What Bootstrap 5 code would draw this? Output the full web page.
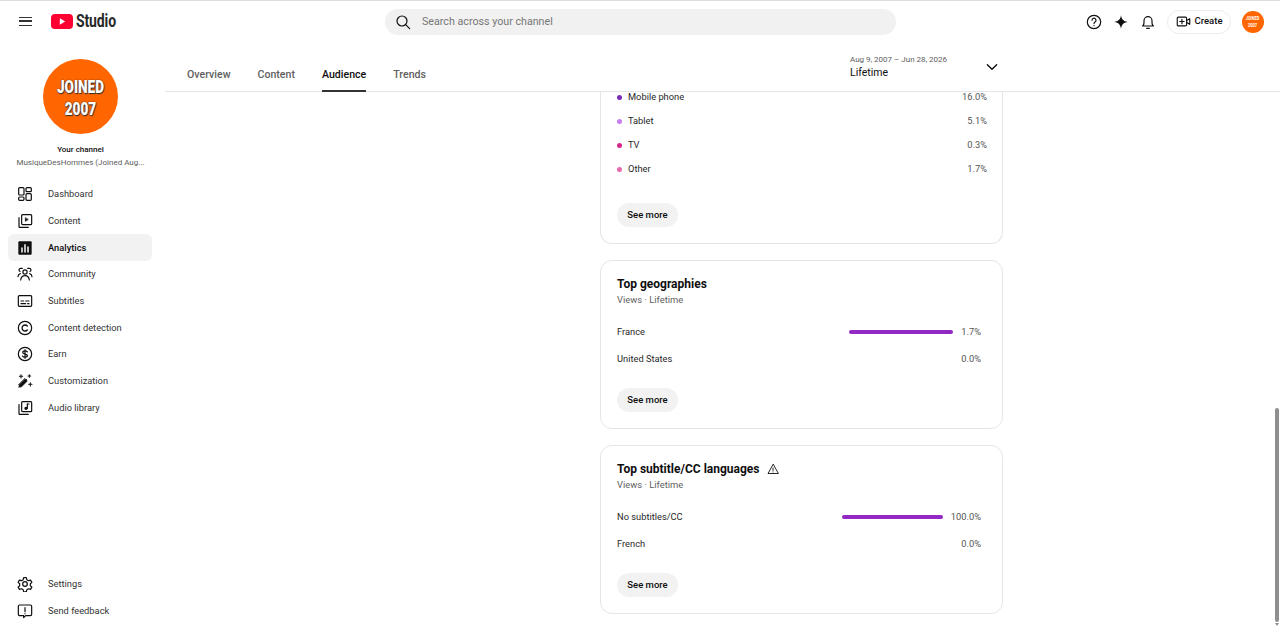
<!DOCTYPE html>
<html lang="en">
<head>
  <meta charset="UTF-8">
  <meta name="viewport" content="width=device-width, initial-scale=1.0">
  <title>Channel analytics - YouTube Studio</title>
  <link rel="stylesheet" href="https://cdn.jsdelivr.net/npm/bootstrap@5.3.3/dist/css/bootstrap.min.css">
  <script src="https://cdn.jsdelivr.net/npm/bootstrap@5.3.3/dist/js/bootstrap.bundle.min.js"></script>
  <style>
    html, body { height: 630px; overflow: hidden; }
    body { font-family: Roboto, "Liberation Sans", sans-serif; color: #0f0f0f; font-size: 10px; background: #fff; }
    svg.ico { fill: none; stroke: #0f0f0f; stroke-width: 1.8; stroke-linecap: round; stroke-linejoin: round; flex: none; }

    .top-bar { height: 45px; border-top: 1px solid #dedede; padding: 0 16px 0 19px; }
    .burger { width: 13px; height: 9px; margin-top: -3px; border-top: 1.5px solid #333; border-bottom: 1.5px solid #333; position: relative; }
    .burger::after { content: ""; position: absolute; left: 0; right: 0; top: 2.25px; height: 1.5px; background: #333; }
    .yt-logo { margin-left: 19px; margin-top: -3px; }
    .studio-word { display: inline-block; width: 40px; font-weight: 700; font-size: 18.5px; letter-spacing: -.2px; margin-left: 3px; margin-top: -3px; color: #282828; line-height: 1; transform: scaleX(.76); transform-origin: left center; white-space: nowrap; }
    .search-box { width: 511px; height: 26px; margin-left: 269px; margin-top: -3px; background: #f1f1f1; border-radius: 13px; padding-left: 10px; color: #777; font-size: 10.7px; gap: 11px; }
    .search-box span { padding-top: 1px; }
    .top-actions { gap: 11px; margin-top: -3px; }
    .create-btn { width: 64px; height: 24px; border: 1px solid #ececec; border-radius: 12px; font-size: 9.5px; font-weight: 500; gap: 4px; margin-left: 0; margin-right: 0; }
    .av-small { width: 22px; height: 22px; border-radius: 50%; background: #ff6600; color: #fff; font-size: 5.5px; font-weight: 700; line-height: 6.5px; text-align: center; }
    .av-small div { transform: scaleX(.72); }
    .chan-pic div { transform: scale(.8, 1.1); }

    .side-col { width: 165px; height: 585px; }
    .chan-pic { width: 75px; height: 75px; border-radius: 50%; background: #ff6600; color: #fff; margin: 14px 0 0 43px; font-weight: 900; font-size: 17px; line-height: 20px; text-align: center; text-shadow: 0 0 1.5px #222, 1px 1px 1px #333; }
    .chan-title { font-size: 8px; font-weight: 500; text-align: center; margin-top: 10px; line-height: 11px; padding-right: 4px; }
    .chan-name { font-size: 8px; color: #606060; text-align: center; line-height: 11px; margin: 2px 0 13px; white-space: nowrap; padding-right: 4px; }
    .side-link { height: 26.67px; margin: 0 13px 0 8px; padding-left: 9px; gap: 15px; color: #333; font-size: 9.3px; border-radius: 6px; text-decoration: none; }
    .side-link.on { background: #f2f2f2; font-weight: 500; color: #0f0f0f; }
    .side-foot { margin-bottom: 6px; }

    .main-col { height: 585px; }
    .tab-row { height: 47px; border-bottom: 1px solid #e6e6e6; padding-left: 22px; position: relative; }
    .tab-item { font-size: 10.6px; font-weight: 500; color: #606060; height: 46px; padding-top: 23px; margin-right: 27px; position: relative; line-height: 13px; }
    .tab-item.on { color: #0f0f0f; }
    .tab-item.on::after { content: ""; position: absolute; left: 0; right: 0; bottom: -1px; height: 2px; background: #333; }
    .date-pick { margin-left: 397px; margin-top: 9px; width: 149px; }
    .date-range { font-size: 8px; color: #606060; line-height: 11px; }
    .date-name { font-size: 10.5px; color: #0f0f0f; line-height: 14px; margin-top: 1px; }

    .scroll-area { padding-left: 435px; overflow: hidden; flex: 1; }
    .stat-box { width: 403px; border: 1px solid #e5e5e5; border-radius: 12px; padding: 0 16px; margin-bottom: 16px; height: 169px; background: #fff; }
    .stat-box.clipped { border-top: 0; border-radius: 0 0 12px 12px; height: 159px; margin-top: -7px; }
    .stat-title { font-size: 12px; font-weight: 700; line-height: 16px; padding-top: 15px; }
    .stat-sub { font-size: 9.4px; color: #606060; line-height: 12px; margin-top: 2px; margin-bottom: 12px; }
    .stat-row { height: 27px; font-size: 9.3px; color: #282828; padding-right: 5px; }
    .stat-row + .more-btn { margin-top: 15.5px; }
    .dev-row { height: 24px; font-size: 9.3px; color: #282828; margin-right: -1px; }
    .dev-dot { width: 5px; height: 5px; border-radius: 50%; margin-right: 6px; }
    .dev-row .val, .stat-row .val { margin-left: auto; color: #555; }
    .stat-bar { height: 4px; border-radius: 2px; background: #9229c4; margin-left: auto; margin-right: 8px; }
    .stat-row .stat-bar + .val { margin-left: 0; }
    .more-btn { display: block; width: 61px; height: 24px; line-height: 24px; background: #f2f2f2; border-radius: 12px; font-size: 9.5px; font-weight: 500; text-align: center; color: #0f0f0f; border: 0; padding: 0; }
    .dev-row + .more-btn { margin-top: 22px; }
    .fake-scroll { position: absolute; right: 1px; top: 408px; width: 4px; height: 214px; background: #8f8f8f; border-radius: 2px; }
    .fake-arrow { position: absolute; right: 1px; top: 623px; border: 2px solid transparent; border-top: 3px solid #8f8f8f; }
  </style>
</head>
<body>
  <!-- Top bar -->
  <header class="top-bar d-flex align-items-center">
    <div class="burger"></div>
    <svg class="yt-logo" width="22" height="15" viewBox="0 0 22 15"><rect width="22" height="15" rx="4" fill="#ff0033"/><path d="M8.8 4.3v6.4l5.4-3.2z" fill="#fff"/></svg>
    <span class="studio-word">Studio</span>
    <div class="search-box d-flex align-items-center">
      <svg class="ico" width="16" height="16" viewBox="0 0 24 24"><circle cx="10.5" cy="10.5" r="7.5"/><path d="M16 16l6 6"/></svg>
      <span>Search across your channel</span>
    </div>
    <div class="top-actions d-flex align-items-center ms-auto">
      <svg class="ico" width="16" height="16" viewBox="0 0 24 24"><circle cx="12" cy="12" r="10"/><path d="M9 9.3a3 3 0 1 1 4.6 2.6c-1 .6-1.6 1.2-1.6 2.4"/><path d="M12 17.4v.2"/></svg>
      <svg width="16" height="16" viewBox="0 0 24 24"><path d="M12 2c1 6 3.500 9 10 10-6.500 1-9 4-10 10-1-6-3.500-9-10-10 6.500-1 9-4 10-10z" fill="#0f0f0f"/></svg>
      <svg class="ico" width="16" height="16" viewBox="0 0 24 24"><path d="M4 18c1.500-1.500 2-3 2-5v-3a6 6 0 0 1 12 0v3c0 2 .5 3.500 2 5z"/><path d="M10 21.500h4"/></svg>
      <div class="create-btn d-flex align-items-center justify-content-center">
        <svg class="ico" width="15" height="15" viewBox="0 0 24 24"><rect x="2" y="5" width="15" height="14" rx="2"/><path d="M17 10.500l5-3v9l-5-3M9.500 8.500v7M6 12h7"/></svg>
        <span>Create</span>
      </div>
      <div class="av-small d-flex align-items-center justify-content-center"><div>JOINED<br>2007</div></div>
    </div>
  </header>

  <div class="d-flex">
    <!-- Sidebar -->
    <nav class="side-col d-flex flex-column flex-shrink-0">
      <div class="chan-pic d-flex align-items-center justify-content-center"><div>JOINED<br>2007</div></div>
      <div class="chan-title">Your channel</div>
      <div class="chan-name">MusiqueDesHommes (Joined Aug...</div>

      <a class="side-link d-flex align-items-center" href="#">
        <svg class="ico" width="16" height="16" viewBox="0 0 24 24"><rect x="2.500" y="2.500" width="8" height="11" rx="1.500"/><rect x="13.500" y="2.500" width="8" height="6" rx="1.500"/><rect x="2.500" y="16.500" width="8" height="5" rx="1.500"/><rect x="13.500" y="11.500" width="8" height="10" rx="1.500"/></svg>Dashboard</a>
      <a class="side-link d-flex align-items-center" href="#">
        <svg class="ico" width="16" height="16" viewBox="0 0 24 24"><rect x="7" y="2.500" width="15" height="15" rx="1.500"/><path d="M3 7v13.500a1 1 0 0 0 1 1h13"/><path d="M12.500 7.500v5l4-2.500z" fill="#0f0f0f" stroke-width="1"/></svg>Content</a>
      <a class="side-link on d-flex align-items-center" href="#">
        <svg width="16" height="16" viewBox="0 0 24 24"><rect x="2" y="2" width="20" height="20" rx="1.500" fill="#0f0f0f"/><path d="M7.500 12v6M12 7v11M16.500 10.500V18" stroke="#fff" stroke-width="2.200" stroke-linecap="round"/></svg>Analytics</a>
      <a class="side-link d-flex align-items-center" href="#">
        <svg class="ico" width="16" height="16" viewBox="0 0 24 24"><circle cx="12" cy="9" r="3.200"/><path d="M5.500 21c.5-4 3-6.500 6.500-6.500s6 2.500 6.500 6.500"/><path d="M8 3.500H5.500a2.500 2.500 0 0 0-1 4.800M16 3.500h2.500a2.500 2.500 0 0 1 1 4.800M1.500 16c.3-2.500 1.500-4 3.500-4.500M22.500 16c-.3-2.500-1.500-4-3.500-4.500"/></svg>Community</a>
      <a class="side-link d-flex align-items-center" href="#">
        <svg class="ico" width="16" height="16" viewBox="0 0 24 24"><rect x="2" y="4" width="20" height="16" rx="1.500"/><path d="M6 12h4M13 12h5M6 16h7M16 16h2"/></svg>Subtitles</a>
      <a class="side-link d-flex align-items-center" href="#">
        <svg class="ico" width="16" height="16" viewBox="0 0 24 24"><circle cx="12" cy="12" r="10"/><path d="M15.500 9a4.500 4.500 0 1 0 0 6" stroke-width="2"/></svg>Content detection</a>
      <a class="side-link d-flex align-items-center" href="#">
        <svg class="ico" width="16" height="16" viewBox="0 0 24 24"><circle cx="12" cy="12" r="10"/><path d="M15.500 8.800c-.6-1-1.800-1.500-3.500-1.500-2 0-3.400.9-3.400 2.400 0 3.400 7 1.400 7 4.700 0 1.500-1.500 2.400-3.600 2.400-1.800 0-3-.6-3.700-1.700M12 5.500v13"/></svg>Earn</a>
      <a class="side-link d-flex align-items-center" href="#">
        <svg class="ico" width="16" height="16" viewBox="0 0 24 24"><path d="M3 21L14 10"/><path d="M12 8.500l3.500 3.500-9.500 9.500-3.500-3.500z" fill="#0f0f0f" stroke-width="1"/><path d="M6 2.500v5M3.500 5h5M18.500 2.500v4M16.500 4.500h4M20 14.500v5M17.500 17h5" stroke-width="1.600"/></svg>Customization</a>
      <a class="side-link d-flex align-items-center" href="#">
        <svg class="ico" width="16" height="16" viewBox="0 0 24 24"><rect x="7" y="2.500" width="15" height="15" rx="1.500"/><path d="M3 7v13.500a1 1 0 0 0 1 1h13"/><path d="M15.500 6v6.500"/><circle cx="13.500" cy="12.500" r="1.600" fill="#0f0f0f"/><path d="M15.500 6h2.500"/></svg>Audio library</a>

      <div class="mt-auto side-foot">
        <a class="side-link d-flex align-items-center" href="#">
          <svg class="ico" width="16" height="16" viewBox="0 0 24 24"><path d="M10 2.500h4l.7 3 2.600 1.500 3-.9 2 3.400-2.300 2.100v3l2.300 2.100-2 3.400-3-.9-2.600 1.500-.7 3h-4l-.7-3-2.600-1.500-3 .9-2-3.400 2.300-2.100v-3L1.700 9.500l2-3.400 3 .9L9.300 5.500z"/><circle cx="12" cy="12" r="3.500"/></svg>Settings</a>
        <a class="side-link d-flex align-items-center" href="#">
          <svg class="ico" width="16" height="16" viewBox="0 0 24 24"><path d="M4 3h16a2 2 0 0 1 2 2v12a2 2 0 0 1-2 2h-7l-3 3v-3H4a2 2 0 0 1-2-2V5a2 2 0 0 1 2-2z"/><path d="M12 7v6M12 15.800v.2"/></svg>Send feedback</a>
      </div>
    </nav>

    <!-- Main -->
    <main class="main-col flex-grow-1 d-flex flex-column">
      <div class="tab-row d-flex align-items-start flex-shrink-0">
        <div class="tab-item">Overview</div>
        <div class="tab-item">Content</div>
        <div class="tab-item on">Audience</div>
        <div class="tab-item">Trends</div>
        <div class="date-pick d-flex align-items-center">
          <div class="flex-grow-1">
            <div class="date-range">Aug 9, 2007 – Jun 28, 2026</div>
            <div class="date-name">Lifetime</div>
          </div>
          <svg class="ico" width="14" height="14" viewBox="0 0 24 24"><path d="M4 8l8 8 8-8" stroke-width="2.400"/></svg>
        </div>
      </div>

      <div class="scroll-area">
        <section class="stat-box clipped">
          <div class="dev-row d-flex align-items-center"><span class="dev-dot" style="background:#7b2cb8"></span>Mobile phone<span class="val">16.0%</span></div>
          <div class="dev-row d-flex align-items-center"><span class="dev-dot" style="background:#c77df0"></span>Tablet<span class="val">5.1%</span></div>
          <div class="dev-row d-flex align-items-center"><span class="dev-dot" style="background:#d6278a"></span>TV<span class="val">0.3%</span></div>
          <div class="dev-row d-flex align-items-center"><span class="dev-dot" style="background:#e868ae"></span>Other<span class="val">1.7%</span></div>
          <button class="more-btn" type="button">See more</button>
        </section>

        <section class="stat-box">
          <div class="stat-title">Top geographies</div>
          <div class="stat-sub">Views · Lifetime</div>
          <div class="stat-row d-flex align-items-center">France<span class="stat-bar" style="width:104px"></span><span class="val">1.7%</span></div>
          <div class="stat-row d-flex align-items-center">United States<span class="val">0.0%</span></div>
          <button class="more-btn" type="button">See more</button>
        </section>

        <section class="stat-box">
          <div class="stat-title d-flex align-items-center">Top subtitle/CC languages
            <svg class="ico ms-2" width="12" height="12" viewBox="0 0 24 24"><path d="M12 3L2 21h20z"/><path d="M12 10v5M12 17.800v.2"/></svg>
          </div>
          <div class="stat-sub">Views · Lifetime</div>
          <div class="stat-row d-flex align-items-center">No subtitles/CC<span class="stat-bar" style="width:101px"></span><span class="val">100.0%</span></div>
          <div class="stat-row d-flex align-items-center">French<span class="val">0.0%</span></div>
          <button class="more-btn" type="button">See more</button>
        </section>
      </div>
    </main>
  </div>
  <div class="fake-scroll"></div>
  <div class="fake-arrow"></div>
</body>
</html>
